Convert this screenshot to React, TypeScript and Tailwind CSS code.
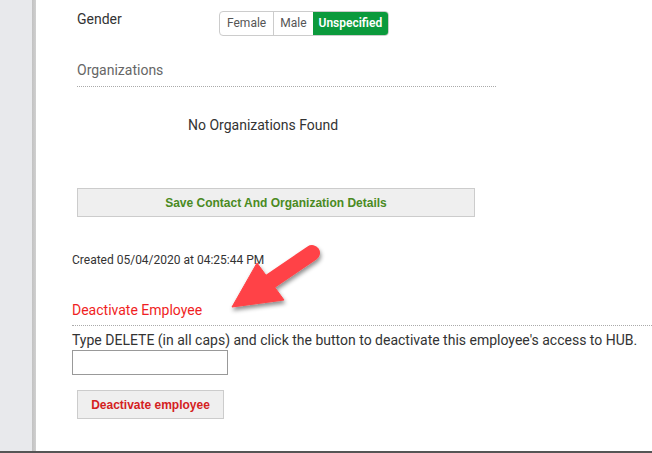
import React from "react";

const Arrow: React.FC = () => (
  <svg className="absolute left-[220px] top-[238px]" width="110" height="85" viewBox="220 238 110 85">
    <defs>
      <filter id="shadow" x="-20%" y="-20%" width="160%" height="160%">
        <feDropShadow dx="1" dy="3" stdDeviation="2" floodColor="#000" floodOpacity="0.45" />
      </filter>
    </defs>
    <g filter="url(#shadow)" fill="#ff4346" stroke="#ff4346">
      <line x1="312" y1="253" x2="262" y2="287" strokeWidth="16" strokeLinecap="round" />
      <polygon points="232,307 257,263 284,300" strokeWidth="1" strokeLinejoin="round" />
    </g>
  </svg>
);

export default function App() {
  return (
    <div className="relative flex h-[453px] w-[652px] overflow-hidden bg-white font-['Roboto',sans-serif] text-[14px] text-[#333]">
      <div className="w-[32px] shrink-0 border-b-2 border-[#555] bg-[#e8e9ec]" />
      <div className="w-[4px] shrink-0 border-b-2 border-[#555] bg-gradient-to-r from-[#c2c2c2] to-[#d0d0d0]" />
      <div className="flex-1 border-b-2 border-[#555] pl-[36px]">
        <div className="pl-[5px] pt-[11px]">
          <div className="flex h-[25px] items-start">
            <div className="w-[142px] leading-[16px]">Gender</div>
            <div className="flex h-[25px] overflow-hidden rounded-[4px] border border-[#ccc] text-[12px] leading-[23px]">
              <span className="px-[7px] text-[#555]">Female</span>
              <span className="border-l border-[#ccc] px-[6px] text-[#555]">Male</span>
              <span className="bg-[#0b9a3c] px-[6px] font-semibold text-white">Unspecified</span>
            </div>
          </div>
          <div className="mt-[24px] w-[419px] border-b border-dotted border-[#aaa] pb-[6px] leading-[20px] text-[#666]">
            Organizations
          </div>
          <div className="mt-[28px] pl-[111px] leading-[20px]">No Organizations Found</div>
          <button className="mt-[53px] block h-[29px] w-[398px] border border-[#ccc] bg-[#efefef] font-['Liberation_Sans',sans-serif] text-[12px] font-bold text-[#4a8a22]">
            Save Contact And Organization Details
          </button>
        </div>
        <div className="mt-[35px] text-[12px] leading-[16px]">Created 05/04/2020 at 04:25:44 PM</div>
        <div className="mt-[32px] border-b border-dotted border-[#aaa] pb-[5px] leading-[20px] text-[#f01e23]">
          Deactivate Employee
        </div>
        <div className="mt-[6px] leading-[16px]">
          Type DELETE (in all caps) and click the button to deactivate this employee's access to HUB.
        </div>
        <input className="mt-[2px] block h-[25px] w-[156px] border border-[#999] bg-white outline-none" />
        <button className="ml-[5px] mt-[15px] block h-[29px] w-[147px] border border-[#ccc] bg-[#efefef] font-['Liberation_Sans',sans-serif] text-[12px] font-bold text-[#d4211e]">
          Deactivate employee
        </button>
      </div>
      <Arrow />
    </div>
  );
}
